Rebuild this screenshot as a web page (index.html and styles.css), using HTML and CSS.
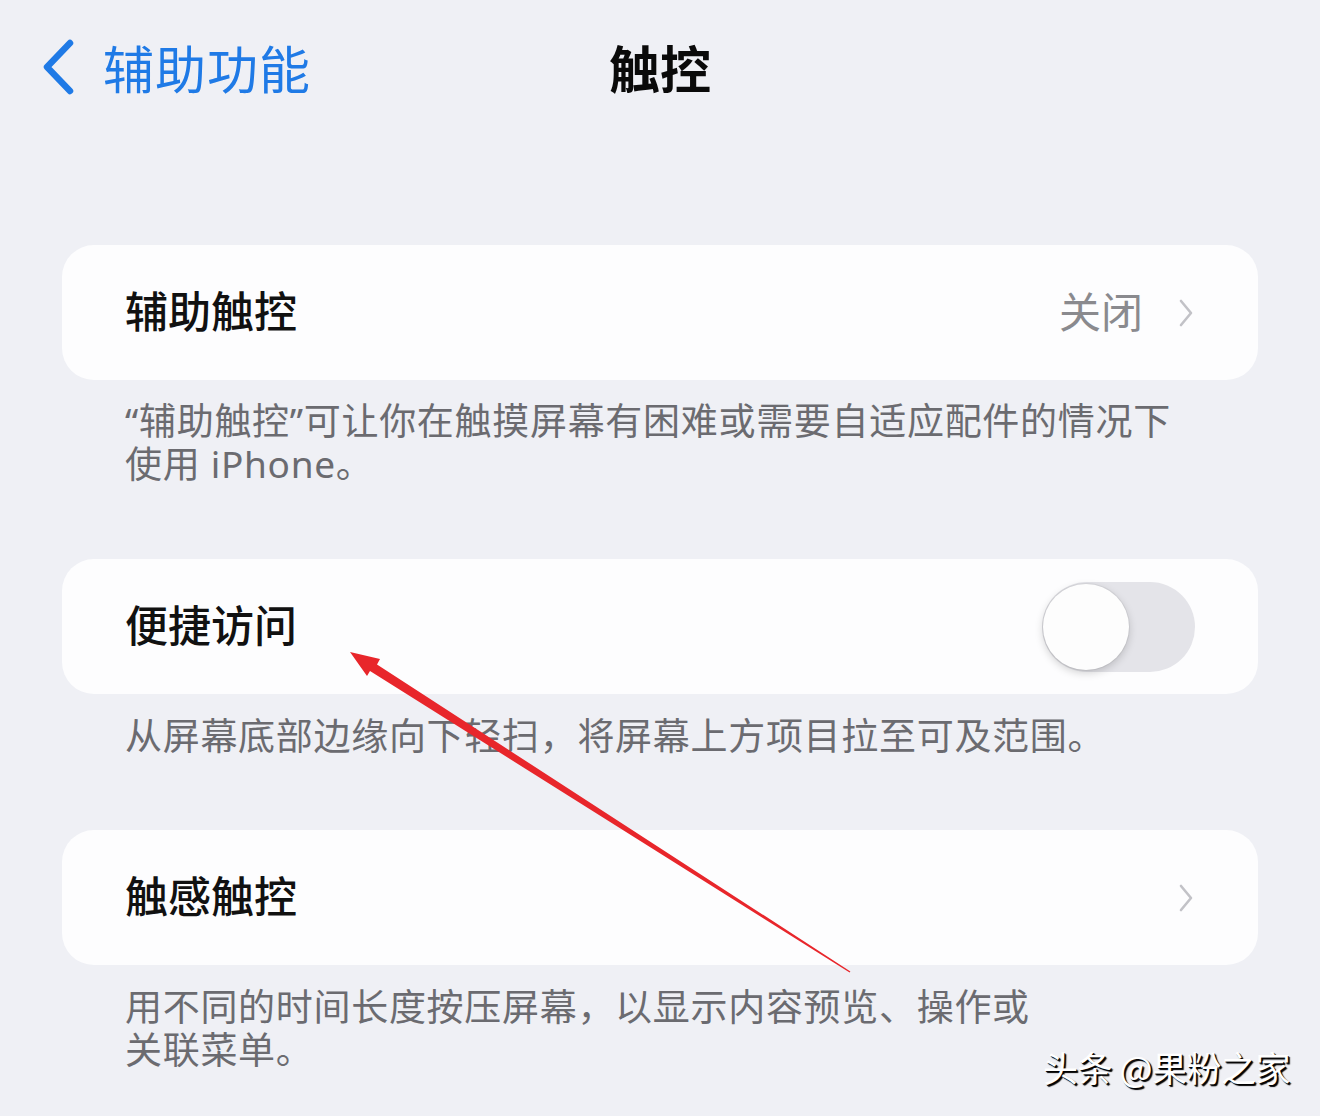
FILE: index.html
```html
<!DOCTYPE html>
<html lang="zh-CN">

<head>
    <meta charset="UTF-8">
    <meta name="viewport" content="width=device-width, initial-scale=1.0">
    <title>触控</title>
    <link rel="stylesheet" href="styles.css">
</head>

<body>
    <div id="nav">
        <a href="#" class="back">
            <svg class="back-icon" width="36" height="58" viewBox="0 0 36 58">
                <path d="M30 5 L7 29 L30 53" fill="none" stroke="#1f7ae6" stroke-width="6.5" stroke-linecap="round" stroke-linejoin="round" />
            </svg>
            <span>辅助功能</span>
        </a>
        <h1 class="nav-title">触控</h1>
        <div></div>
    </div>

    <div id="content">
        <div class="group">
            <div class="cell">
                <span class="cell-label">辅助触控</span>
                <span class="cell-value">关闭</span>
                <svg class="chevron" width="18" height="30" viewBox="0 0 18 30">
                    <path d="M4 3 L14 15 L4 27" fill="none" stroke="#c2c2c7" stroke-width="2.6" stroke-linecap="round" stroke-linejoin="round" />
                </svg>
            </div>
            <p class="footer wide">“辅助触控”可让你在触摸屏幕有困难或需要自适应配件的情况下使用 iPhone。</p>
        </div>

        <div class="group">
            <div class="cell">
                <span class="cell-label">便捷访问</span>
                <div class="switch"><div class="knob"></div></div>
            </div>
            <p class="footer">从屏幕底部边缘向下轻扫，将屏幕上方项目拉至可及范围。</p>
        </div>

        <div class="group">
            <div class="cell">
                <span class="cell-label">触感触控</span>
                <svg class="chevron" width="18" height="30" viewBox="0 0 18 30">
                    <path d="M4 3 L14 15 L4 27" fill="none" stroke="#c2c2c7" stroke-width="2.6" stroke-linecap="round" stroke-linejoin="round" />
                </svg>
            </div>
            <p class="footer narrow">用不同的时间长度按压屏幕，以显示内容预览、操作或关联菜单。</p>
        </div>
    </div>

    <!-- 标注箭头 -->
    <svg class="arrow" width="1320" height="1116" viewBox="0 0 1320 1116">
        <polygon points="350,652 380,659 377,664.5 850.4,971.4 849.6,972.6 370,671 367,676" fill="#e8262b" />
    </svg>

    <div class="watermark">头条 @果粉之家</div>
</body>

</html>
```

FILE: styles.css
```css
body {
    margin: 0;
    width: 1320px;
    height: 1116px;
    overflow: hidden;
    background-color: #eff0f5;
    font-family: "Noto Sans CJK SC", "Noto Sans", sans-serif;
    color: #111;
    position: relative;
}

#nav {
    height: 134px;
    display: grid;
    grid-template-columns: 1fr auto 1fr;
    align-items: center;
    padding-left: 40px;
    padding-right: 40px;
}

.back {
    display: flex;
    align-items: center;
    gap: 27px;
    color: #1f7ae6;
    text-decoration: none;
    font-size: 51px;
    letter-spacing: 1px;
}

.back-icon {
    display: block;
}

.nav-title {
    margin: 0;
    font-size: 51px;
    font-weight: 700;
    color: #0a0a0a;
}

#content {
    padding: 111px 62px 0;
}

.group {
    margin-bottom: 74px;
}

.cell {
    height: 135px;
    background-color: #fdfdfe;
    border-radius: 32px;
    display: flex;
    align-items: center;
    padding: 0 63px;
}

.cell-label {
    font-size: 43px;
    font-weight: 500;
    flex: 1;
    padding-bottom: 7px;
}

.cell-value {
    font-size: 42px;
    color: #8a8a8e;
    margin-right: 34px;
    padding-bottom: 7px;
}

.chevron {
    display: block;
}

.switch {
    width: 153px;
    height: 90px;
    border-radius: 45px;
    background-color: #e4e4e9;
    position: relative;
}

.knob {
    position: absolute;
    left: 1px;
    top: 2px;
    width: 86px;
    height: 86px;
    border-radius: 50%;
    background-color: #fdfdfd;
    box-shadow: 0 3px 8px rgba(0, 0, 0, 0.18), 0 0 0 1px rgba(0, 0, 0, 0.05);
}

.footer {
    margin: 0;
    padding: 19px 40px 0 63px;
    font-size: 37px;
    line-height: 43px;
    letter-spacing: 0.7px;
    color: #6b6b70;
}

/* 引号和英文用西文字体，宽度更接近原图 */
.footer.wide {
    font-family: "Noto Sans", "Noto Sans CJK SC", sans-serif;
    padding-right: 70px;
}

.footer.narrow {
    padding-right: 220px;
}

.arrow {
    position: absolute;
    left: 0;
    top: 0;
    pointer-events: none;
}

.watermark {
    position: absolute;
    right: 30px;
    bottom: 24px;
    font-size: 35px;
    color: #fff;
    text-shadow: 2px 2px 1px #000, 1px 1px 0 #222;
    letter-spacing: -0.5px;
}
```
